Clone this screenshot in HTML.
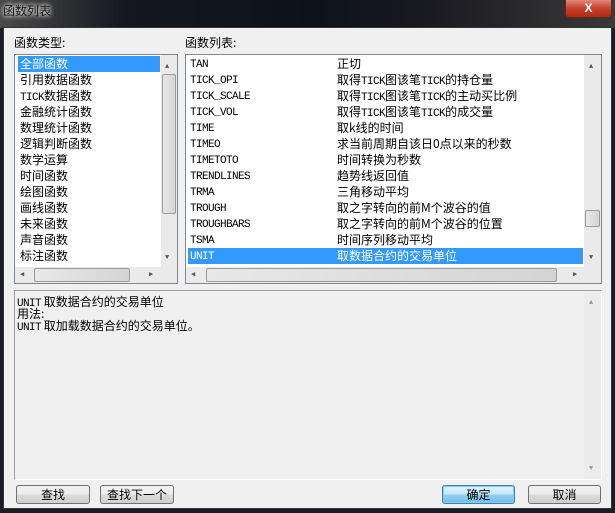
<!DOCTYPE html><html><head><meta charset="utf-8"><style>
*{margin:0;padding:0;box-sizing:border-box}
body{width:615px;height:513px;overflow:hidden;background:#1a1e24;font-family:"Liberation Mono","WenQuanYi Zen Hei",monospace;font-size:12px;position:relative}
.a{position:absolute}
.cj{font-family:"WenQuanYi Zen Hei","Noto Sans CJK SC",sans-serif}
.t{font-size:12px;line-height:16px;white-space:nowrap;color:#000}
.m{font-family:"Liberation Mono","WenQuanYi Zen Hei",monospace;font-size:11px;letter-spacing:-0.6px}
.sb{background:#eaeaea}
.th{background:linear-gradient(90deg,#e8e8e8,#d4d4d4);border:1px solid #9a9a9a;border-radius:2px}
.btn{position:absolute;top:485px;height:19px;border:1px solid #707070;border-radius:3px;background:linear-gradient(#f2f2f2,#ebebeb 50%,#dcdcdc 51%,#cfcfcf);text-align:center;font-size:12px;line-height:17px}
.row{height:16px;line-height:16px;position:relative;white-space:nowrap}
.row span{position:absolute;top:0}
.row span.m{top:1px}
.row span span{position:static}
.l div{height:16px;line-height:16px;padding-left:2px}
.d div{height:12px;line-height:12px;white-space:nowrap}
</style></head><body>
<div class="a" style="left:0;top:0;width:615px;height:28px;background:linear-gradient(90deg,#4a4a4a,#15191f 20%,#0d1219 50%,#1a1a20 70%,#3a3a3a)"></div>
<div class="a cj" style="left:3px;top:2px;font-size:12px;color:#111;text-shadow:0 0 6px #fff,0 0 4px #fff">函数列表</div>
<div class="a" style="left:565px;top:0;width:47px;height:18px;background:linear-gradient(#e08a7a,#c7402a 50%,#b02a15);border:1px solid #5a2a20;border-top:none;border-radius:0 0 4px 4px;color:#fff;text-align:center;font:bold 12px/17px 'Liberation Sans',sans-serif">X</div>
<div class="a" style="left:3px;top:27px;width:609px;height:482px;background:#f0f0f0;border:1px solid #333"></div>
<div class="a cj t" style="left:14px;top:35px">函数类型:</div>
<div class="a cj t" style="left:185px;top:35px">函数列表:</div>
<!-- left list -->
<div class="a" style="left:14px;top:54px;width:164px;height:230px;background:#fff;border:1px solid #828790"></div>
<div class="a cj t l" style="left:18px;top:56px;width:142px">
<div style="background:#3399ff;color:#fff">全部函数</div>
<div>引用数据函数</div>
<div><span class="m">TICK</span>数据函数</div>
<div>金融统计函数</div>
<div>数理统计函数</div>
<div>逻辑判断函数</div>
<div>数学运算</div>
<div>时间函数</div>
<div>绘图函数</div>
<div>画线函数</div>
<div>未来函数</div>
<div>声音函数</div>
<div>标注函数</div></div>
<div class="a sb" style="left:161px;top:55px;width:16px;height:212px"></div>
<div class="a th" style="left:162px;top:74px;width:14px;height:140px"></div>
<div class="a" style="left:165px;top:63px;font-size:7px;color:#555">▲</div>
<div class="a" style="left:165px;top:254px;font-size:7px;color:#555">▼</div>
<div class="a sb" style="left:15px;top:267px;width:146px;height:16px"></div>
<div class="a th" style="left:34px;top:268px;width:96px;height:14px"></div>
<div class="a" style="left:20px;top:270px;font-size:7px;color:#555">◀</div>
<div class="a" style="left:149px;top:270px;font-size:7px;color:#555">▶</div>
<div class="a sb" style="left:161px;top:267px;width:16px;height:16px"></div>
<!-- right list -->
<div class="a" style="left:185px;top:54px;width:417px;height:230px;background:#fff;border:1px solid #828790"></div>
<div class="a t" style="left:188px;top:56px;width:395px"><div class="row"><span class="m" style="left:2px">TAN</span><span class="cj" style="left:149px">正切</span></div><div class="row"><span class="m" style="left:2px">TICK_OPI</span><span class="cj" style="left:149px">取得<span class="m">TICK</span>图该笔<span class="m">TICK</span>的持仓量</span></div><div class="row"><span class="m" style="left:2px">TICK_SCALE</span><span class="cj" style="left:149px">取得<span class="m">TICK</span>图该笔<span class="m">TICK</span>的主动买比例</span></div><div class="row"><span class="m" style="left:2px">TICK_VOL</span><span class="cj" style="left:149px">取得<span class="m">TICK</span>图该笔<span class="m">TICK</span>的成交量</span></div><div class="row"><span class="m" style="left:2px">TIME</span><span class="cj" style="left:149px">取k线的时间</span></div><div class="row"><span class="m" style="left:2px">TIMEO</span><span class="cj" style="left:149px">求当前周期自该日0点以来的秒数</span></div><div class="row"><span class="m" style="left:2px">TIMETOTO</span><span class="cj" style="left:149px">时间转换为秒数</span></div><div class="row"><span class="m" style="left:2px">TRENDLINES</span><span class="cj" style="left:149px">趋势线返回值</span></div><div class="row"><span class="m" style="left:2px">TRMA</span><span class="cj" style="left:149px">三角移动平均</span></div><div class="row"><span class="m" style="left:2px">TROUGH</span><span class="cj" style="left:149px">取之字转向的前M个波谷的值</span></div><div class="row"><span class="m" style="left:2px">TROUGHBARS</span><span class="cj" style="left:149px">取之字转向的前M个波谷的位置</span></div><div class="row"><span class="m" style="left:2px">TSMA</span><span class="cj" style="left:149px">时间序列移动平均</span></div><div class="row" style="background:#3399ff;color:#fff"><span class="m" style="left:2px">UNIT</span><span class="cj" style="left:149px">取数据合约的交易单位</span></div></div>
<div class="a sb" style="left:584px;top:55px;width:17px;height:212px"></div>
<div class="a th" style="left:585px;top:210px;width:15px;height:17px"></div>
<div class="a" style="left:589px;top:63px;font-size:7px;color:#555">▲</div>
<div class="a" style="left:589px;top:254px;font-size:7px;color:#555">▼</div>
<div class="a sb" style="left:186px;top:267px;width:398px;height:16px"></div>
<div class="a th" style="left:206px;top:268px;width:351px;height:14px"></div>
<div class="a" style="left:191px;top:270px;font-size:7px;color:#555">◀</div>
<div class="a" style="left:573px;top:270px;font-size:7px;color:#555">▶</div>
<div class="a sb" style="left:584px;top:267px;width:17px;height:16px"></div>
<!-- description -->
<div class="a" style="left:14px;top:290px;width:588px;height:190px;border:1px solid #a0a0a0;border-right-color:#fff;border-bottom-color:#fff"></div>
<div class="a" style="left:584px;top:292px;width:17px;height:187px;background:#ececec"></div>
<div class="a" style="left:589px;top:299px;font-size:7px;color:#999">▲</div>
<div class="a" style="left:589px;top:465px;font-size:7px;color:#999">▼</div>
<div class="a cj d" style="left:17px;top:296px;font-size:12px">
<div><span class="m">UNIT</span> 取数据合约的交易单位</div>
<div>用法:</div>
<div><span class="m">UNIT</span> 取加载数据合约的交易单位。</div></div>
<div class="btn cj" style="left:16px;width:74px">查找</div>
<div class="btn cj" style="left:100px;width:74px">查找下一个</div>
<div class="btn cj" style="left:442px;width:73px;border-color:#3c7fb1;box-shadow:inset 0 0 0 1px #7ad0f5;background:linear-gradient(#e5f4fc,#c4e5f6 50%,#98d1ef 51%,#6cbde8)">确定</div>
<div class="btn cj" style="left:528px;width:73px">取消</div>
</body></html>
